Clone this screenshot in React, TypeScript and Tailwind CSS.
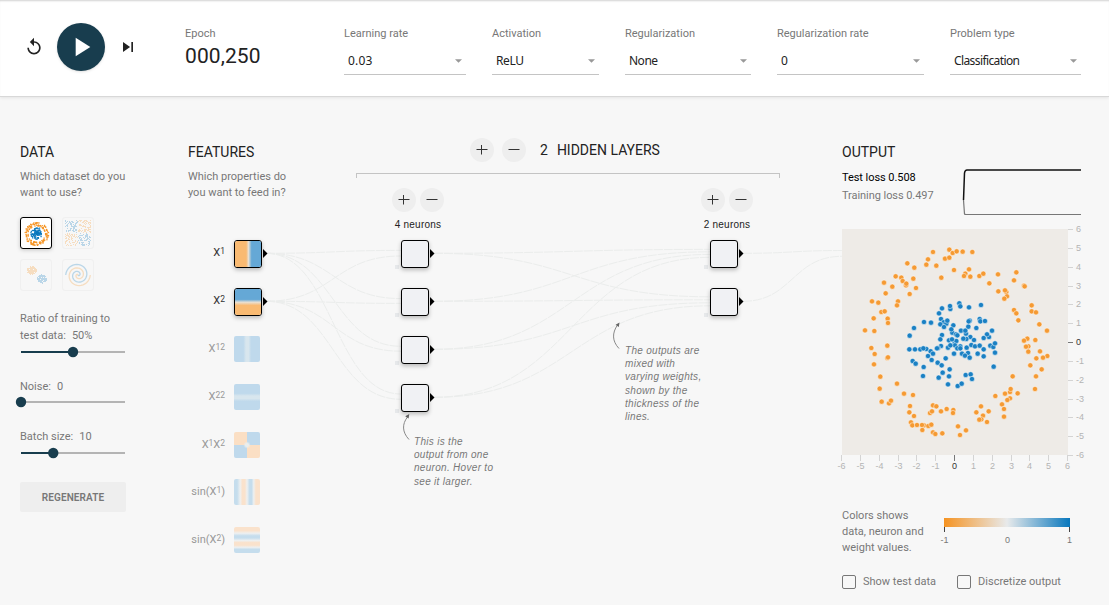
import React from "react";
import { MdPlayArrow, MdReplay, MdSkipNext } from "react-icons/md";

type Pt = [number, number];

const OUTER: Pt[] = [
  [308,365],[357,358],[367,368],[379,363],[397,364],[426,365],[293,387],[344,385],[357,382],[231,399],[288,403],[318,406],
  [252,412],[196,438],[213,442],[217,452],[249,445],[333,442],[371,419],[416,417],[405,430],[401,437],[420,439],[447,437],
  [459,430],[503,432],[558,426],[551,450],[477,459],[161,457],[186,469],[227,465],[228,460],[257,473],[238,491],
  [166,489],[125,513],[144,517],[203,513],[200,525],[153,545],[163,543],[130,564],[172,565],[173,578],[104,600],[132,602],
  [504,483],[528,485],[524,480],[530,498],[522,505],[581,466],[583,468],[604,525],[604,543],[617,546],[551,539],[558,549],
  [564,570],[627,582],[650,601],[615,629],[591,625],[581,631],[594,648],[587,649],[594,664],[629,663],[651,677],[638,682],
  [618,684],[600,705],[634,717],[617,738],[614,776],[547,738],[123,653],[133,671],[131,702],[171,646],[171,683],[173,681],
  [150,739],[148,775],[200,760],[154,814],[176,819],[182,811],[221,790],[248,794],[239,827],[237,846],[251,857],[308,825],
  [318,828],[299,848],[305,843],[332,843],[349,836],[369,839],[368,848],[242,876],[246,885],[260,884],[281,885],[275,884],
  [294,887],[303,883],[276,899],[308,906],[315,911],[336,909],[383,888],[389,914],[407,900],[438,846],[452,828],[475,843],
  [458,856],[453,867],[447,868],[470,875],[515,822],[521,836],[521,859],[495,797],[524,790],[539,785],[541,776],[562,789],
  [539,804],[531,809],
];

const INNER: Pt[] = [
  [335,534],[360,536],[359,527],[387,519],[390,528],[416,531],[452,524],[326,549],[281,575],[302,577],[332,566],
  [340,576],[348,580],[351,571],[330,582],[341,590],[369,585],[366,607],[363,597],[251,593],[238,616],[335,614],[330,627],
  [332,647],[323,653],[377,612],[381,615],[392,601],[407,610],[405,601],[414,589],[418,571],[415,573],[448,566],[450,573],[464,572],
  [438,593],[485,601],[476,620],[470,612],[460,623],[420,620],[431,629],[408,626],[399,625],[373,638],[378,632],[356,630],[365,627],
  [374,645],[353,652],[360,645],[390,648],[381,654],[390,654],[409,652],[423,644],[434,648],[448,646],[460,657],[480,646],[489,650],
  [494,639],[494,667],[442,670],[460,678],[395,670],[413,668],[404,676],[418,682],[371,670],[237,657],[254,657],[270,657],
  [288,656],[279,654],[301,663],[308,670],[320,654],[293,677],[304,689],[346,684],[322,697],[334,705],[247,692],[256,700],
  [280,710],[278,737],[325,742],[337,727],[358,717],[356,738],[353,762],[382,767],[394,760],[406,734],[421,732],[425,746],
  [490,709],
];

const TICKS = [-6, -5, -4, -3, -2, -1, 0, 1, 2, 3, 4, 5, 6];

function Label({ children }: { children: React.ReactNode }) {
  return <div className="text-[11px] leading-4 text-[#777] whitespace-nowrap">{children}</div>;
}

function Select({ label, value, width, tracking }: { label: string; value: string; width: string; tracking: string }) {
  return (
    <div className={`${width} shrink-0`}>
      <div className="text-[11px] leading-4 text-[#777] whitespace-nowrap">{label}</div>
      <div className="mt-[9px] flex h-6 items-center justify-between border-b border-[#c4c4c4] pb-[3px] pl-1 pr-1">
        <span className={`font-['Noto_Sans','Open_Sans',sans-serif] text-[12px] leading-4 text-[#222] ${tracking}`}>{value}</span>
        <svg width="7" height="4" viewBox="0 0 7 4"><path d="M0 0.300h7L3.500 3.800z" fill="#999" /></svg>
      </div>
    </div>
  );
}

function Slider({ label, value, pct, className }: { label: React.ReactNode; value: string; pct: number; className: string }) {
  return (
    <div className={className}>
      <div className="text-[11px] leading-[17px] text-[#777] whitespace-nowrap">
        {label}<span className="ml-[6px]">{value}</span>
      </div>
      <svg className="-ml-1 block overflow-visible" width="110" height="16" viewBox="-5 -8 110 16">
        <rect x="0" y="-1" width="104" height="2" fill="#b4b4b4" />
        <rect x="0" y="-1" width={pct * 104} height="2" fill="#183d4e" />
        <circle cx={pct * 104} cy="0" r="5.2" fill="#183d4e" />
      </svg>
    </div>
  );
}

function RoundButtons({ gap }: { gap: string }) {
  return (
    <div className={`flex ${gap}`}>
      <button className="flex size-6 items-center justify-center rounded-full bg-[#eee] text-[#333]"><PlusIcon /></button>
      <button className="flex size-6 items-center justify-center rounded-full bg-[#eee] text-[#333]"><MinusIcon /></button>
    </div>
  );
}
function PlusIcon() {
  return <svg width="12" height="12" viewBox="0 0 12 12"><path d="M0.500 5.500h11M5.500 1v9.500" stroke="currentColor" /></svg>;
}
function MinusIcon() {
  return <svg width="12" height="12" viewBox="0 0 12 12"><path d="M0.500 5.500h11" stroke="currentColor" /></svg>;
}

function rings() {
  const a: React.ReactNode[] = [];
  OUTER.forEach(([x, y], i) => a.push(<rect key={`o${i}`} x={(x - 36) / 23.5 + 0.7} y={(y - 297) / 24.5 + 1.5} width="1.3" height="1.3" fill="#f59322" />));
  INNER.forEach(([x, y], i) => a.push(<rect key={`i${i}`} x={(x - 369) / 25 + 14.6} y={(y - 640) / 22 + 14.8} width="1.25" height="1.25" fill="#0877bd" />));
  return a;
}
function xor() {
  const a: React.ReactNode[] = [];
  for (let i = 0; i < 360; i++) {
    const x = (i * 0.61803 * 26) % 26;
    const y = (i * 0.75488 * 26 + i * i * 0.031) % 26;
    if (Math.abs(x - 13) < 0.6 || Math.abs(y - 13) < 0.6) continue;
    a.push(<rect key={i} x={Math.floor(x) + 2} y={Math.floor(y) + 2} width="1" height="1" fill={(x < 13) === (y < 13) ? "#0877bd" : "#f59322"} />);
  }
  return a;
}
function gauss() {
  const a: React.ReactNode[] = [];
  for (let i = 0; i < 180; i++) {
    const r = 5 * Math.pow(((i * 37) % 180) / 180, 0.65);
    const t = i * 2.17;
    a.push(<rect key={i} x={Math.round((i % 2 ? 10.5 : 20.5) + r * Math.cos(t))} y={Math.round((i % 2 ? 10 : 18.5) + r * 0.85 * Math.sin(t))} width="1" height="1" fill={i % 2 ? "#f59322" : "#0877bd"} />);
  }
  return a;
}
function spiralPath(phase: number) {
  let d = "";
  for (let i = 0; i <= 60; i++) {
    const r = (i / 60) * 12.3;
    const t = 1.75 * (i / 60) * 2 * Math.PI + phase;
    d += `${i ? "L" : "M"}${(15 + r * Math.sin(t)).toFixed(2)} ${(15 + r * Math.cos(t)).toFixed(2)}`;
  }
  return d;
}

function Thumb({ children, active }: { children: React.ReactNode; active?: boolean }) {
  return (
    <div className={active ? "flex size-8 items-center justify-center rounded-[3px] border border-black bg-white shadow-[0_1px_4px_rgba(0,0,0,0.2)]" : "flex size-8 items-center justify-center rounded-[3px] border border-[#f0f0f0]"}>
      <svg width="30" height="30" viewBox="0 0 30 30" className={active ? "" : "opacity-25"}>{children}</svg>
    </div>
  );
}

function Node({ x, y, children }: { x: number; y: number; children?: React.ReactNode }) {
  return (
    <div className="absolute size-7 rounded-[3px] border border-black bg-[#f0f1f4] shadow-[0_2px_4px_rgba(0,0,0,0.25)]" style={{ left: x, top: y }}>
      {children}
      <svg className="absolute left-[28px] top-[8px]" width="5" height="9" viewBox="0 0 5 9"><path d="M0 0L4.500 4.500L0 9z" fill="#000" /></svg>
    </div>
  );
}

function Feature({ y, label, bg }: { y: number; label: React.ReactNode; bg: string }) {
  return (
    <>
      <FeatureLabel y={y} faded>{label}</FeatureLabel>
      <div className={`absolute left-[46px] size-[26px] rounded-[2px] ${bg}`} style={{ top: y }} />
    </>
  );
}
function FeatureLabel({ y, children, faded }: { y: number; children: React.ReactNode; faded?: boolean }) {
  return (
    <div className={`absolute left-0 w-[37px] text-right text-[11px] leading-4 whitespace-nowrap ${faded ? "text-[#999]" : "text-[#333]"}`} style={{ top: y + 5 }}>
      {children}
    </div>
  );
}
function Sup({ children }: { children: React.ReactNode }) {
  return <span className="relative -top-[2px] text-[8.5px]">{children}</span>;
}

function edge(x1: number, y1: number, x2: number, y2: number) {
  const m = (x1 + x2) / 2;
  return <path key={`${x1}-${y1}-${x2}-${y2}`} d={`M${x1} ${y1}C${m} ${y1} ${m} ${y2} ${x2} ${y2}`} />;
}

function Edges() {
  const rows = [253.3, 301.3, 349.3, 397.3];
  const first = [[250.4, 256], [298.6, 303.4], [346.3, 351.2], [394, 399.3]];
  const second = [[249.4, 251.8, 254.4, 257.3], [296.8, 299.8, 302.8, 305.8]];
  return (
    <svg className="absolute -left-[188px] -top-[236px]" width="842" height="500" viewBox="0 0 842 500" fill="none" stroke="#ebedec" strokeWidth="1" strokeDasharray="9 1">
      {first.flatMap((t) => t.map((y, i) => edge(266, rows[i], 401, y)))}
      {second.flatMap((t) => t.map((y, i) => edge(434, rows[i], 710, y)))}
      {edge(743, 253.3, 842, 250.5)}
      {edge(743, 301.3, 842, 256.3)}
      {rows.map((y) => <rect key={y} x="395" y={Math.round(y) + 12} width="4" height="4" fill="#e6e8ea" stroke="none" />)}
      {rows.slice(0, 2).map((y) => <rect key={y} x="704" y={Math.round(y) + 12} width="4" height="4" fill="#e6e8ea" stroke="none" />)}
      <g stroke="#888" strokeDasharray="none">
        <path d="M409 439.500C402 432 402 424 407.500 417" />
        <path d="M619 348.500C612 341 612 333 617.500 325" />
      </g>
      <path d="M409.300 414L408.600 418.600L405.200 416.200zM619.500 322.500L618.800 327L615.600 324.700z" fill="#666" stroke="none" />
    </svg>
  );
}

function Callout({ x, y, lines }: { x: number; y: number; lines: string[] }) {
  return (
    <div className="absolute font-['Liberation_Sans',Arial,sans-serif] text-[10px] italic leading-[13.2px] tracking-[0.3px] text-[#777] whitespace-nowrap" style={{ left: x, top: y }}>
      {lines.map((l) => <div key={l}>{l}</div>)}
    </div>
  );
}

function Plot() {
  return (
    <svg className="block overflow-visible font-['Liberation_Sans',Arial,sans-serif] text-[9px]" width="245" height="245" viewBox="0 0 245 245">
      <rect width="226" height="226" fill="#eeebe7" />
      <g transform="scale(0.33333) translate(-36 -297)" stroke="#fff" strokeWidth="1.800" strokeOpacity="0.800">
        {OUTER.map(([x, y], i) => <circle key={i} cx={x + 1} cy={y + 1} r="7.800" fill="#f59a33" />)}
        {INNER.map(([x, y], i) => <circle key={i} cx={x + 1} cy={y + 1} r="7.800" fill="#1a80c3" />)}
      </g>
      {TICKS.map((t) => {
        const x = Math.round(((t + 6) * 226) / 12) - 0.5;
        const y = Math.round(((6 - t) * 226) / 12) + 0.5;
        const zero = t === 0;
        return (
          <g key={t}>
            <path d={`M${x} 226v6`} stroke={zero ? "#777" : "#d4d4d4"} />
            <path d={`M226 ${y}h5`} stroke={zero ? "#777" : "#d4d4d4"} />
            <text x={x} y="240" textAnchor="middle" fill={zero ? "#333" : "#b4b4b4"}>{t}</text>
            <text x="234" y={y + 2.5} fill={zero ? "#333" : "#b4b4b4"}>{t}</text>
          </g>
        );
      })}
    </svg>
  );
}

function Check({ label }: { label: string }) {
  return (
    <label className="flex items-center gap-[7px]">
      <span className="size-[14px] rounded-[2px] border border-[#777]" />
      <span className="text-[11px] leading-4 text-[#777] whitespace-nowrap">{label}</span>
    </label>
  );
}

export default function App() {
  return (
    <div className="flex h-[605px] w-[1109px] flex-col overflow-hidden bg-[#f7f7f7] font-[Roboto,sans-serif] text-[#222]">
      <header className="flex h-[97px] shrink-0 border-b border-[#d8d8d8] bg-white shadow-[inset_0_2px_2px_-1px_rgba(0,0,0,0.18),0_1px_3px_rgba(0,0,0,0.08)]">
        <div className="ml-6 flex h-[94px] items-center">
          <MdReplay className="size-5" />
          <span className="ml-[13px] flex size-12 items-center justify-center rounded-full bg-[#183d4e] text-white shadow-sm">
            <MdPlayArrow className="size-8" />
          </span>
          <MdSkipNext className="ml-[13px] size-5" />
        </div>
        <div className="ml-[47px] w-[159px] pt-[26px]">
          <div className="text-[11px] leading-4 text-[#777]">Epoch</div>
          <div className="mt-[2px] text-[21px] leading-6 tracking-[0.1px]">000,250</div>
        </div>
        <div className="flex gap-[26px] pt-[26px]">
          <Select label="Learning rate" value="0.03" width="w-[122px]" tracking="tracking-[0.2px]" />
          <Select label="Activation" value="ReLU" width="w-[107px]" tracking="tracking-[-0.35px]" />
          <Select label="Regularization" value="None" width="w-[126px]" tracking="tracking-[-0.5px]" />
          <Select label="Regularization rate" value="0" width="w-[147px]" tracking="tracking-[-0.35px]" />
          <Select label="Problem type" value="Classification" width="w-[131px]" tracking="tracking-[-0.6px]" />
        </div>
      </header>

      <main className="flex flex-1 pl-5">
        <section className="w-[106px] shrink-0 pt-[46px]">
          <h2 className="text-[14px] leading-[18px]">DATA</h2>
          <div className="mt-[8px]">
            <Label>Which dataset do you</Label>
            <Label>want to use?</Label>
          </div>
          <div className="mt-[16px] grid w-[74px] grid-cols-2 gap-[10px]">
            <Thumb active>{rings()}</Thumb>
            <Thumb>{xor()}</Thumb>
            <Thumb>{gauss()}</Thumb>
            <Thumb>
              <path d={spiralPath(0)} fill="none" stroke="#0877bd" strokeWidth="1.300" />
              <path d={spiralPath(Math.PI)} fill="none" stroke="#f59322" strokeWidth="1.300" />
            </Thumb>
          </div>
          <Slider className="mt-[19px]" label={<>Ratio of training to<br />test data:</>} value="50%" pct={0.5} />
          <Slider className="mt-[18px] [&>svg]:-mt-px" label="Noise:" value="0" pct={0} />
          <Slider className="mt-[18px]" label="Batch size:" value="10" pct={0.31} />
          <button className="mt-[21px] flex h-[30px] w-[106px] items-center justify-center rounded-[2px] bg-[#eee] text-[10px] font-semibold tracking-[0.1px] text-[#777]">REGENERATE</button>
        </section>

        <section className="relative ml-[62px] w-[654px] shrink-0">
          <div className="flex">
            <div className="w-[168px] pt-[46px]">
              <h2 className="text-[14px] leading-[18px]">FEATURES</h2>
              <div className="mt-[8px]">
                <Label>Which properties do</Label>
                <Label>you want to feed in?</Label>
              </div>
            </div>
            <div className="w-[424px] pt-[41px]">
              <div className="flex items-center pl-[114px]">
                <RoundButtons gap="gap-2" />
                <span className="ml-[14px] text-[14px]">2</span>
                <h2 className="ml-[9px] text-[14px] leading-6">HIDDEN LAYERS</h2>
              </div>
              <div className="mt-[11px] h-[5px] border-x border-t border-[#c4c4c4]" />
              <div className="mt-[10px] flex justify-between pl-[36px] pr-[27px]">
                {["4 neurons", "2 neurons"].map((t) => (
                  <div key={t} className="flex w-[52px] flex-col items-center">
                    <RoundButtons gap="gap-1" />
                    <div className="mt-[5px] font-['Liberation_Sans',Arial,sans-serif] text-[10px] leading-4 tracking-[0.2px]">{t}</div>
                  </div>
                ))}
              </div>
            </div>
          </div>
          <div className="absolute left-0 top-[139px] h-[330px] w-[654px]">
            <Edges />
            <FeatureLabel y={4}>X<Sup>1</Sup></FeatureLabel>
            <FeatureLabel y={52}>X<Sup>2</Sup></FeatureLabel>
            <Node x={46} y={4}>
              <div className="size-full rounded-[2px] bg-[linear-gradient(90deg,#f9ba72_43%,#e8e0d4_52%,#65a8d6_64%)]" />
            </Node>
            <Node x={46} y={52}>
              <div className="size-full rounded-[2px] bg-[linear-gradient(180deg,#65a8d6_40%,#e8e0d4_51%,#f9ba72_63%)]" />
            </Node>
            <Feature y={100} label={<>X<Sup>12</Sup></>} bg="bg-[linear-gradient(90deg,#bfd9ec_36%,#d8e6ee_46%,#d8e6ee_56%,#bfd9ec_66%)]" />
            <Feature y={148} label={<>X<Sup>22</Sup></>} bg="bg-[linear-gradient(180deg,#bfd9ec_36%,#d8e6ee_46%,#d8e6ee_56%,#bfd9ec_66%)]" />
            <Feature y={196} label={<>X<Sup>1</Sup>X<Sup>2</Sup></>} bg="bg-[radial-gradient(circle,#eaeeee_0,#eaeeee_8%,transparent_20%),conic-gradient(#bfd9ec_25%,#fbdfc4_25%_50%,#bfd9ec_50%_75%,#fbdfc4_75%)]" />
            <Feature y={243} label={<>sin(X<Sup>1</Sup>)</>} bg="bg-[linear-gradient(90deg,#c5dded_12%,#eef0f0_24%,#fae2cc_32%,#fae2cc_42%,#eef0f0_50%,#c5dded_60%,#c5dded_68%,#eef0f0_76%,#fae2cc_84%)]" />
            <Feature y={291} label={<>sin(X<Sup>2</Sup>)</>} bg="bg-[linear-gradient(180deg,#fae2cc_14%,#eef0f0_24%,#c5dded_34%,#c5dded_42%,#eef0f0_52%,#fae2cc_60%,#fae2cc_70%,#eef0f0_78%,#c5dded_86%)]" />
            {[4, 52, 100, 148].map((y) => <Node key={y} x={213} y={y} />)}
            {[4, 52].map((y) => <Node key={y} x={522} y={y} />)}
            <Callout x={226} y={199} lines={["This is the", "output from one", "neuron. Hover to", "see it larger."]} />
            <Callout x={437} y={108} lines={["The outputs are", "mixed with", "varying weights,", "shown by the", "thickness of the", "lines."]} />
          </div>
        </section>

        <section className="w-[245px] shrink-0 pt-[46px]">
          <h2 className="text-[14px] leading-[18px]">OUTPUT</h2>
          <div className="flex h-[68px] pt-[7px]">
            <div className="w-[120px] pt-px text-[11px] leading-[18px] tracking-[-0.06px]">
              <div className="text-black">Test loss 0.508</div>
              <div className="text-[#777]">Training loss 0.497</div>
            </div>
            <svg width="119" height="48" viewBox="0 0 119 48" fill="none">
              <path d="M1.500 32L2.500 46Q3 46.500 4 46.500H119" stroke="#777" strokeWidth="1.200" />
              <path d="M1.500 32L2.500 5Q3 2 5 2H119" stroke="#111" strokeWidth="1.500" />
            </svg>
          </div>
          <Plot />
          <div className="mt-[34px] flex">
            <div className="w-[95px]"><Label>Colors shows</Label><Label>data, neuron and</Label><Label>weight values.</Label></div>
            <svg className="mt-[9px] overflow-visible font-['Liberation_Sans',Arial,sans-serif] text-[9px]" width="140" height="32" viewBox="0 0 140 32">
              <defs><linearGradient id="scale"><stop stopColor="#f59322" /><stop offset=".5" stopColor="#e8eaeb" /><stop offset="1" stopColor="#0877bd" /></linearGradient></defs>
              <rect x="7" y="1" width="126" height="9" fill="url(#scale)" />
              <path d="M7.500 10v5M132.500 10v5" stroke="#444" />
              <g fill="#777" textAnchor="middle"><text x="7.500" y="26">-1</text><text x="70.500" y="26">0</text><text x="132.500" y="26">1</text></g>
            </svg>
          </div>
          <div className="mt-[18px] flex gap-[21px]"><Check label="Show test data" /><Check label="Discretize output" /></div>
        </section>
      </main>
    </div>
  );
}
